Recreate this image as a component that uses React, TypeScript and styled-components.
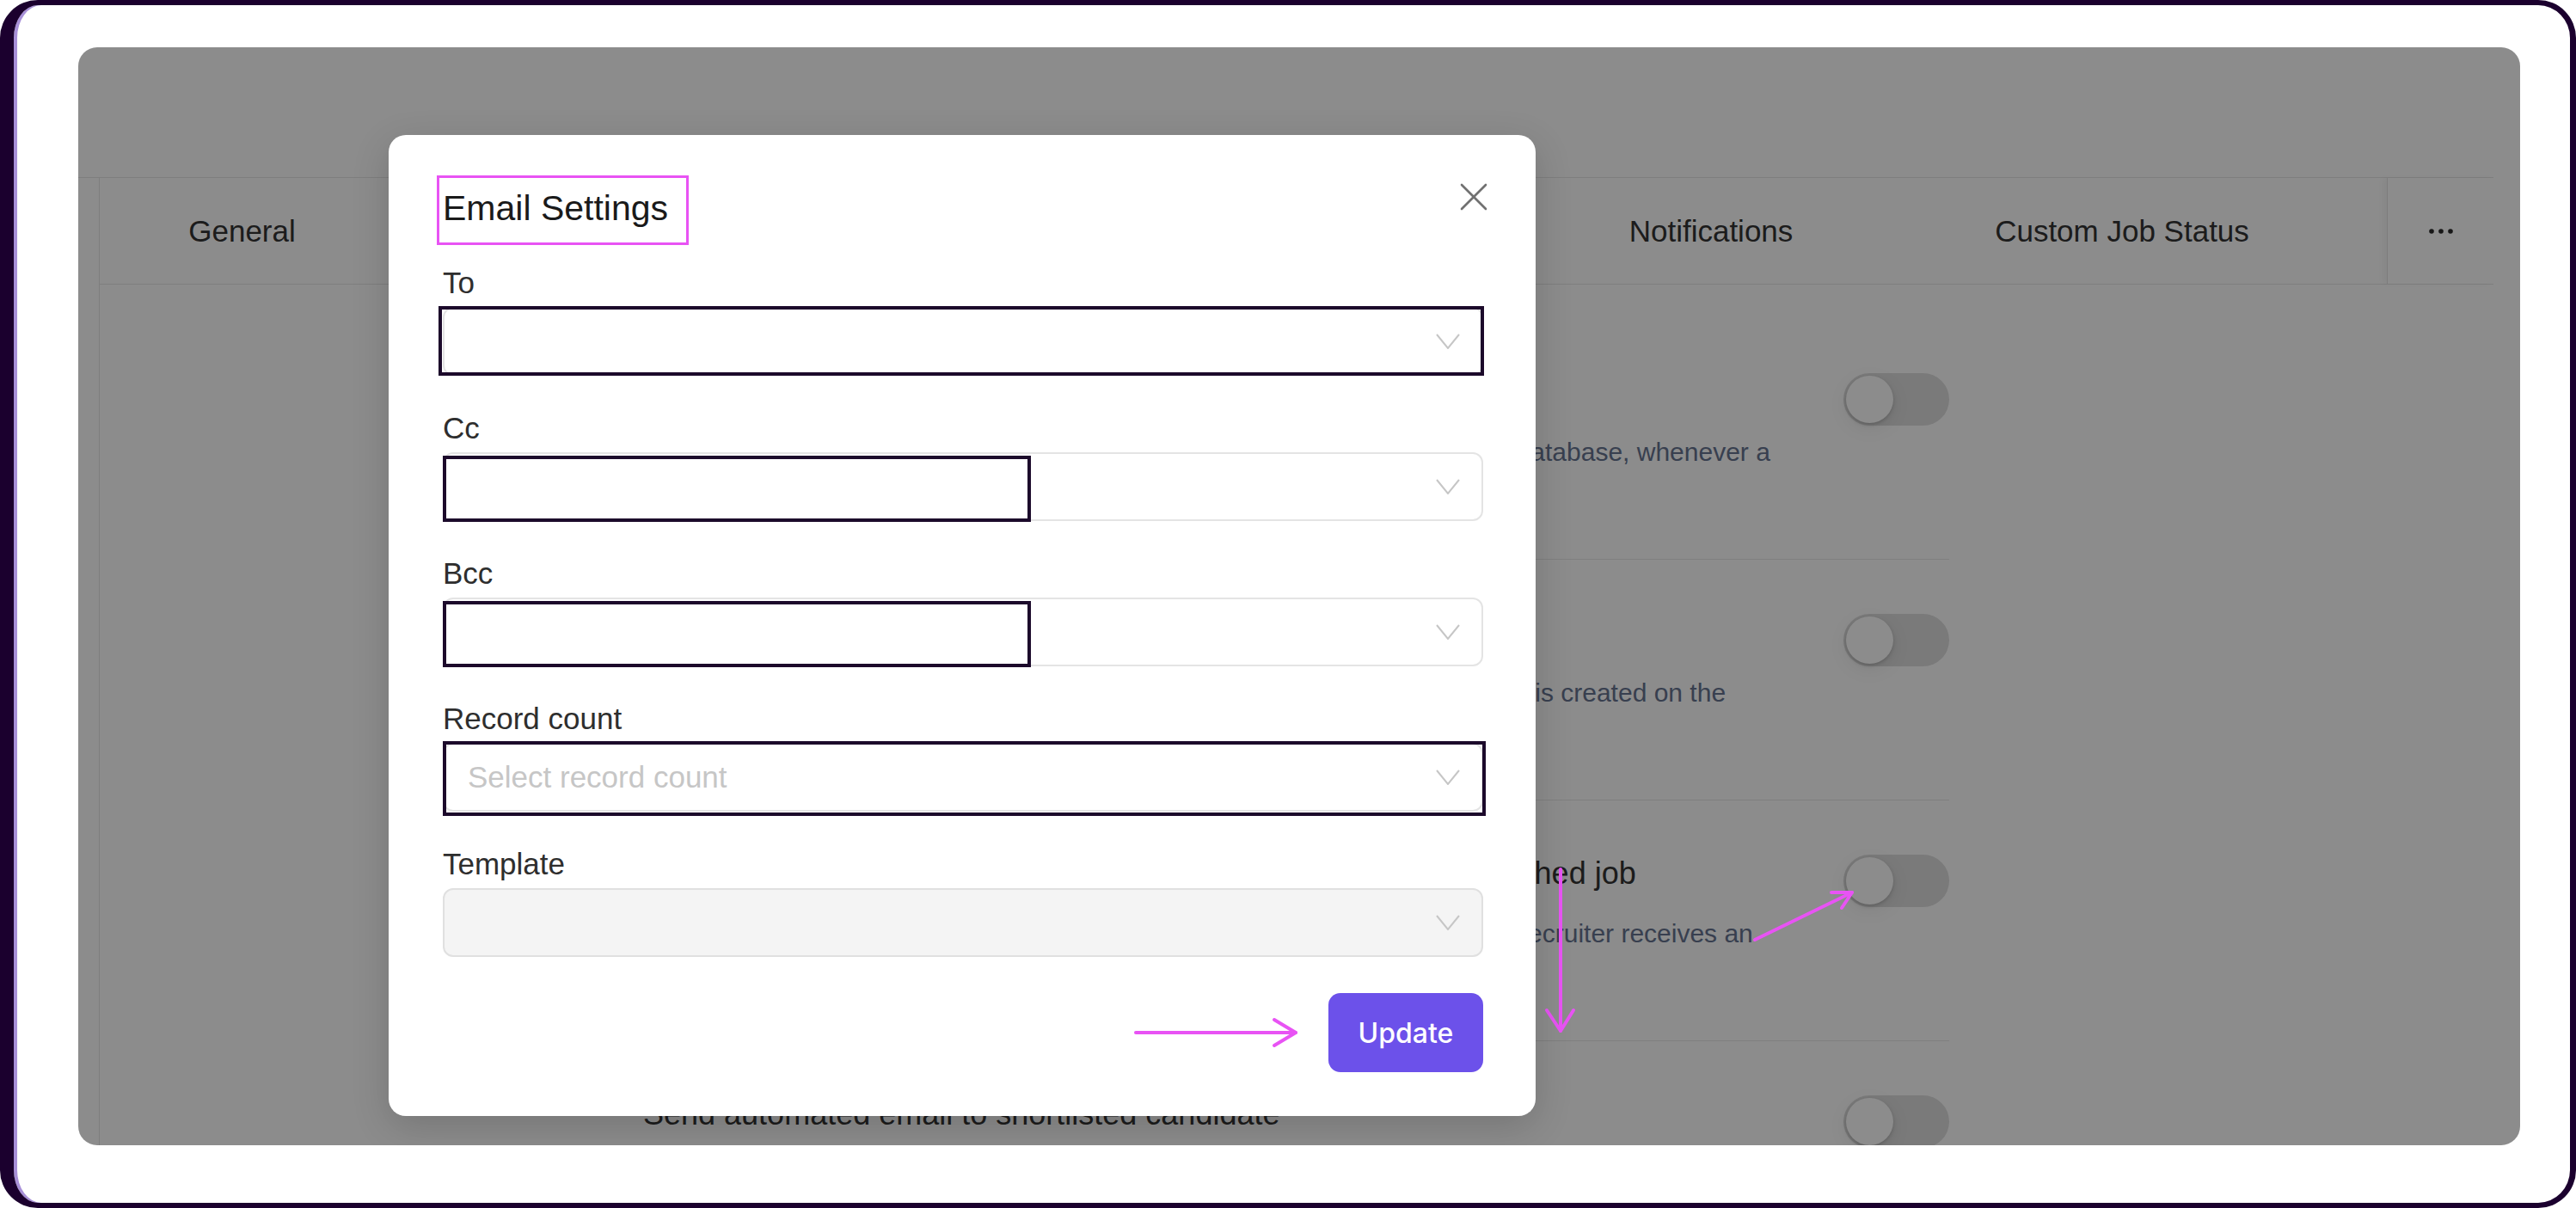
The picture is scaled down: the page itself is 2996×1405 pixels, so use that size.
import React from 'react';
import styled, { createGlobalStyle } from 'styled-components';

const GlobalStyle = createGlobalStyle`
  * { box-sizing: border-box; }
  html, body { margin: 0; padding: 0; background: #ffffff; }
  body { font-family: "Liberation Sans", Arial, sans-serif; color: #333; }
`;

const PINK = '#e853f4';
const MARK = '#1c0a2b';

const Frame = styled.div`
  width: 2996px;
  height: 1405px;
  display: flex;
  border-style: solid;
  border-color: #1b002e;
  border-width: 6px 7px 6px 16px;
  border-radius: 44px;
  box-shadow: inset 4px 0 0 #a890d8;
  padding: 49px 58px 67px 75px;
  background: #ffffff;
`;

const Panel = styled.div`
  flex: 1;
  position: relative;
  overflow: hidden;
  border-radius: 22px;
  background: #ffffff;
  display: flex;
  flex-direction: column;
`;

const Header = styled.div`
  height: 152px;
  flex: none;
  margin-right: 31px;
  border-bottom: 1px solid #e5e5e5;
`;

const Body = styled.div`
  flex: 1;
  display: flex;
  padding-left: 24px;
  margin-right: 31px;
`;

const Main = styled.div`
  flex: 1;
  border-left: 1px solid #e5e5e5;
  display: flex;
  flex-direction: column;
`;

const TabBar = styled.div`
  height: 124px;
  flex: none;
  display: flex;
  align-items: stretch;
  border-bottom: 1px solid #e5e5e5;
`;

const Tab = styled.div<{ $w: number }>`
  width: ${(p) => p.$w}px;
  flex: none;
  display: flex;
  align-items: center;
  justify-content: center;
  font-size: 35px;
  color: #333;
  white-space: nowrap;
`;

const TabSpacer = styled.div`
  flex: 1;
`;

const MoreTab = styled.div`
  width: 124px;
  flex: none;
  display: flex;
  align-items: center;
  justify-content: center;
  border-left: 1px solid #e2e2e2;
  box-shadow: -5px 0 6px rgba(0, 0, 0, 0.035);
`;

const Rows = styled.div`
  padding: 40px 0 0 632px;
  display: flex;
  flex-direction: column;
`;

const Row = styled.div`
  width: 1519px;
  height: 280px;
  flex: none;
  display: flex;
  justify-content: space-between;
  align-items: flex-start;
  padding-top: 63px;
  border-bottom: 1px solid #e8e8e8;
`;

const RowText = styled.div`
  display: flex;
  flex-direction: column;
`;

const RowTitle = styled.div`
  font-size: 36px;
  line-height: 44px;
  color: #333;
  white-space: nowrap;
`;

const RowDesc = styled.div`
  margin-top: 26px;
  font-size: 30px;
  line-height: 44px;
  color: #667491;
  white-space: nowrap;
`;

const Toggle = styled.div`
  width: 123px;
  height: 61px;
  flex: none;
  border-radius: 31px;
  background: #dedede;
  padding: 3px;
  display: flex;
  align-items: center;
`;

const Knob = styled.div`
  width: 55px;
  height: 55px;
  border-radius: 50%;
  background: #ffffff;
  box-shadow: 0 2px 4px rgba(0, 0, 0, 0.18), 0 6px 22px rgba(0, 0, 0, 0.08);
`;

const Overlay = styled.div`
  position: absolute;
  inset: 0;
  background: rgba(0, 0, 0, 0.45);
`;

const Notes = styled.svg`
  position: absolute;
  inset: 0;
  width: 100%;
  height: 100%;
  pointer-events: none;
`;

const Modal = styled.div`
  position: absolute;
  left: 361px;
  top: 102px;
  width: 1334px;
  height: 1141px;
  background: #ffffff;
  border-radius: 20px;
  box-shadow: 0 12px 44px rgba(0, 0, 0, 0.16);
  padding: 47px 61px 51px 63px;
  display: flex;
  flex-direction: column;
`;

const ModalHead = styled.div`
  display: flex;
  justify-content: space-between;
  align-items: flex-start;
  margin-left: -7px;
  margin-right: -5px;
`;

const Title = styled.h2`
  margin: 0;
  height: 81px;
  border: 3px solid ${PINK};
  padding: 0 21px 0 4px;
  font-size: 41px;
  line-height: 70px;
  font-weight: 400;
  color: #1a1a1a;
  white-space: nowrap;
`;

const CloseButton = styled.button`
  margin-top: 9px;
  width: 32px;
  height: 32px;
  padding: 0;
  border: none;
  background: none;
  display: flex;
`;

const Form = styled.div`
  margin-top: 24px;
  display: flex;
  flex-direction: column;
  gap: 41px;
`;

const Group = styled.div`
  display: flex;
  flex-direction: column;
  gap: 8px;
`;

const Label = styled.label`
  font-size: 35px;
  line-height: 40px;
  color: #2e2e2e;
`;

const Select = styled.div<{ $disabled?: boolean }>`
  position: relative;
  height: 80px;
  border: 2px solid ${(p) => (p.$disabled ? '#e0e0e0' : '#e4e4e4')};
  border-radius: 12px;
  background: ${(p) => (p.$disabled ? '#f4f4f4' : '#ffffff')};
  display: flex;
  align-items: center;
  justify-content: space-between;
  padding: 0 25px 0 27px;
`;

const Placeholder = styled.span`
  font-size: 35px;
  color: #c6c6c6;
`;

const Mark = styled.div<{ $top: number; $left: number; $right?: number; $width?: number; $bottom: number; $fill?: boolean }>`
  position: absolute;
  top: ${(p) => p.$top}px;
  left: ${(p) => p.$left}px;
  bottom: ${(p) => p.$bottom}px;
  ${(p) => (p.$width ? `width: ${p.$width}px;` : `right: ${p.$right ?? 0}px;`)}
  border: 4px solid ${MARK};
  background: ${(p) => (p.$fill ? '#ffffff' : 'transparent')};
`;

const Footer = styled.div`
  margin-top: 42px;
  display: flex;
  justify-content: flex-end;
  align-items: center;
  gap: 34px;
`;

const UpdateButton = styled.button`
  width: 180px;
  height: 92px;
  border: none;
  border-radius: 14px;
  background: #6c51ea;
  color: #ffffff;
  font-family: Inter, "Liberation Sans", sans-serif;
  font-size: 32px;
  font-weight: 500;
`;

const Chevron = () => (
  <svg width="28" height="18" viewBox="0 0 28 18">
    <polyline points="1,1 14,17 27,1" fill="none" stroke="#c6c6c6" strokeWidth="2" />
  </svg>
);

const Dots = () => (
  <svg width="30" height="8" viewBox="0 0 30 8">
    <circle cx="4" cy="4" r="2.8" fill="#2a2a2a" />
    <circle cx="15" cy="4" r="2.8" fill="#2a2a2a" />
    <circle cx="26" cy="4" r="2.8" fill="#2a2a2a" />
  </svg>
);

const tabs = [
  { label: 'General', w: 331 },
  { label: 'Pipeline Stages', w: 444 },
  { label: 'Email Templates', w: 444 },
  { label: 'Career Page', w: 443 },
  { label: 'Notifications', w: 424 },
  { label: 'Custom Job Status', w: 532 },
];

const rows = [
  {
    title: 'Add new candidates to talent pool',
    desc: 'New candidates are automatically added to the talent pool in your candidate database, whenever a',
    more: 'new application is received.',
  },
  {
    title: 'Send automated email for new job',
    desc: 'An automated email notification is sent to the hiring team whenever a new job is created on the',
    more: 'platform.',
  },
  {
    title: 'Send automated email to recruiter on new application for a published job',
    desc: 'Whenever a candidate applies to your published job opening, the concerned recruiter receives an',
    more: 'email notification.',
  },
  {
    title: 'Send automated email to shortlisted candidate',
    desc: 'Shortlisted candidates receive an automated email as soon as they are moved to the shortlist',
    more: 'stage.',
  },
];

const App = () => {
  return (
    <>
      <GlobalStyle />
      <Frame>
        <Panel>
          <Header />
          <Body>
            <Main>
              <TabBar>
                {tabs.map((t) => (
                  <Tab key={t.label} $w={t.w}>{t.label}</Tab>
                ))}
                <TabSpacer />
                <MoreTab><Dots /></MoreTab>
              </TabBar>
              <Rows>
                {rows.map((r) => (
                  <Row key={r.title}>
                    <RowText>
                      <RowTitle>{r.title}</RowTitle>
                      <RowDesc>{r.desc}<br />{r.more}</RowDesc>
                    </RowText>
                    <Toggle><Knob /></Toggle>
                  </Row>
                ))}
              </Rows>
            </Main>
          </Body>

          <Overlay />

          <Notes viewBox="0 0 2840 1277">
            <g fill="none" stroke={PINK} strokeWidth="4" strokeLinecap="round" strokeLinejoin="round">
              <line x1="1724" y1="956" x2="1724" y2="1144" />
              <polyline points="1708,1120 1724,1144 1739,1120" />
              <line x1="1950" y1="1038" x2="2063" y2="983" />
              <polyline points="2039,983 2063,983 2051,1001" />
            </g>
          </Notes>

          <Modal>
            <ModalHead>
              <Title>Email Settings</Title>
              <CloseButton aria-label="Close">
                <svg width="32" height="32" viewBox="0 0 32 32">
                  <g stroke="#717171" strokeWidth="2.6" strokeLinecap="round">
                    <line x1="2" y1="2" x2="30" y2="30" />
                    <line x1="30" y1="2" x2="2" y2="30" />
                  </g>
                </svg>
              </CloseButton>
            </ModalHead>

            <Form>
              <Group>
                <Label>To</Label>
                <Select>
                  <span />
                  <Chevron />
                  <Mark $top={-3} $left={-7} $right={-3} $bottom={-2} />
                </Select>
              </Group>
              <Group>
                <Label>Cc</Label>
                <Select>
                  <span />
                  <Chevron />
                  <Mark $top={2} $left={-2} $width={684} $bottom={-3} $fill />
                </Select>
              </Group>
              <Group>
                <Label>Bcc</Label>
                <Select>
                  <span />
                  <Chevron />
                  <Mark $top={2} $left={-2} $width={684} $bottom={-3} $fill />
                </Select>
              </Group>
              <Group>
                <Label>Record count</Label>
                <Select>
                  <Placeholder>Select record count</Placeholder>
                  <Chevron />
                  <Mark $top={-4} $left={-2} $right={-5} $bottom={-7} />
                </Select>
              </Group>
              <Group>
                <Label>Template</Label>
                <Select $disabled>
                  <span />
                  <Chevron />
                </Select>
              </Group>
            </Form>

            <Footer>
              <svg width="192" height="36" viewBox="0 0 192 36">
                <g fill="none" stroke={PINK} strokeWidth="4" strokeLinecap="round" strokeLinejoin="round">
                  <line x1="2" y1="18" x2="188" y2="18" />
                  <polyline points="163,3 188,18 163,33" />
                </g>
              </svg>
              <UpdateButton>Update</UpdateButton>
            </Footer>
          </Modal>
        </Panel>
      </Frame>
    </>
  );
};

export default App;
